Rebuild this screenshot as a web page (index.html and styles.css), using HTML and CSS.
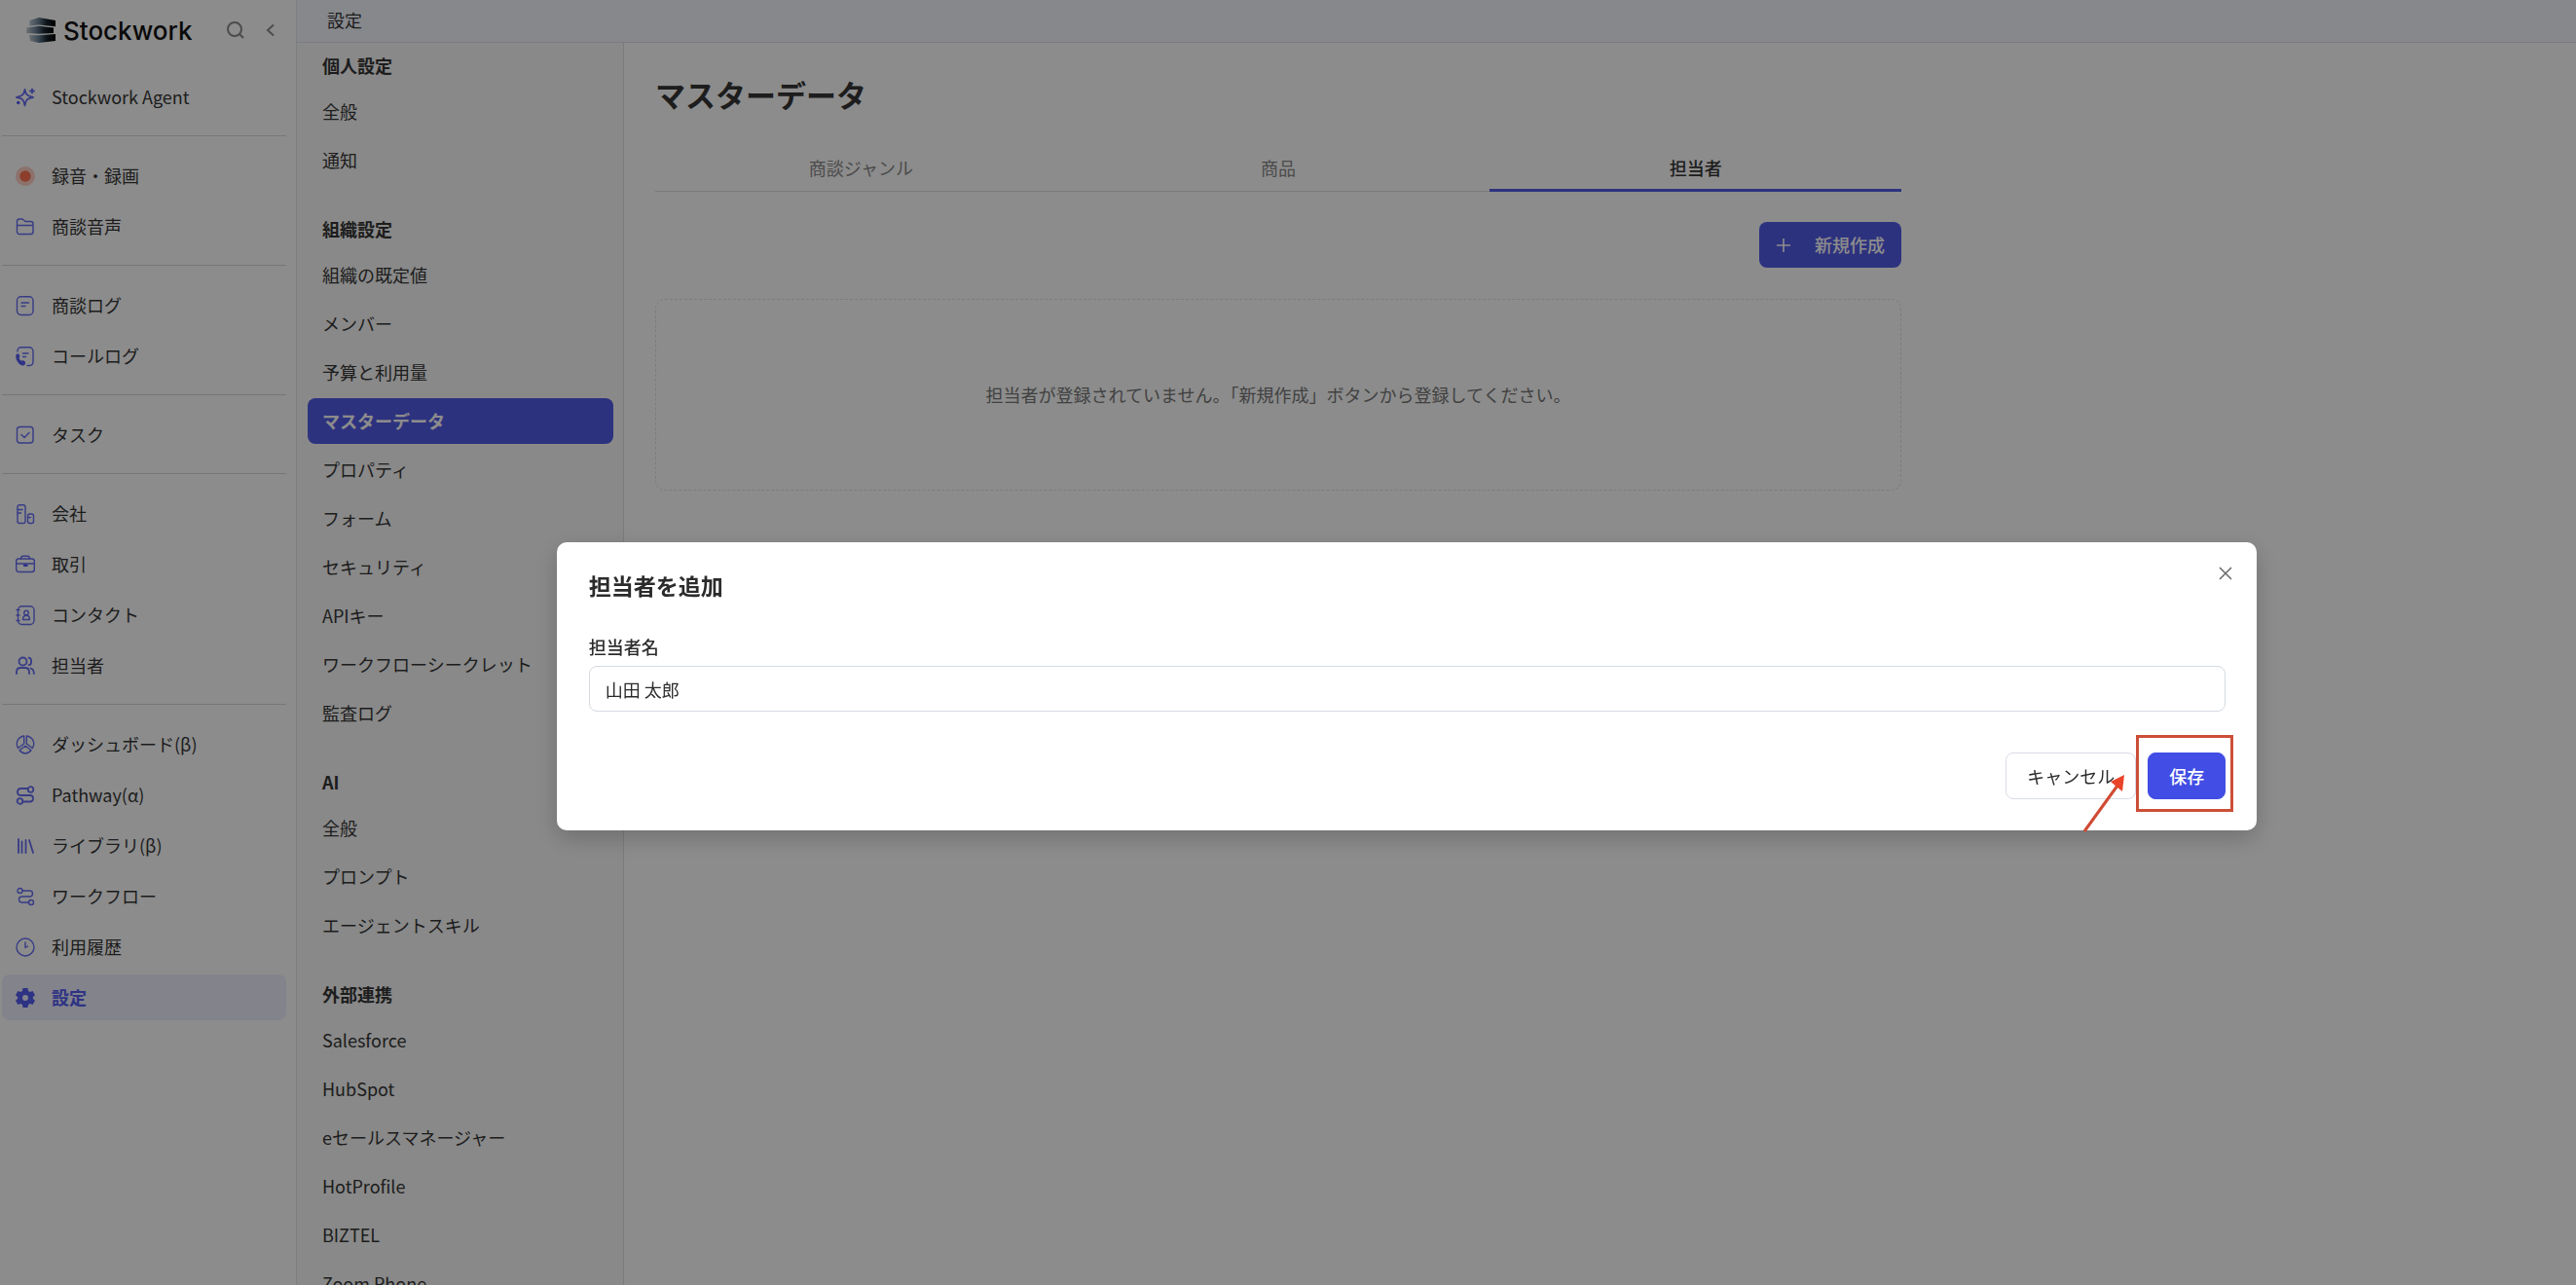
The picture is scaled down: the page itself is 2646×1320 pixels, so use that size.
FILE: index.html
```html
<!DOCTYPE html>
<html lang="ja">
<head>
  <meta charset="UTF-8">
  <title>設定 | Stockwork</title>
  <meta name="viewport" content="width=device-width, initial-scale=1.0">
  <link rel="stylesheet" href="styles.css">
</head>
<body>

<div class="app">

  <!-- Main sidebar -->
  <aside class="sidebar">
    <div class="sidebar-header">
      <a href="#" class="logo">
        <svg width="30" height="26" viewBox="0 0 30 26">
          <defs>
            <linearGradient id="logoFill" x1="0" x2="1">
              <stop offset="0" stop-color="#c3ccd4"/>
              <stop offset="0.35" stop-color="#6c8499"/>
              <stop offset="0.65" stop-color="#1c2833"/>
              <stop offset="1" stop-color="#000"/>
            </linearGradient>
          </defs>
          <path d="M3.500 3L13 0L30 3V9.300L13 7.500L3 8.500Z" fill="url(#logoFill)"/>
          <path d="M.5 10.500L13 8.800L28 10.500V16L13 16.800L0 16Z" fill="url(#logoFill)"/>
          <path d="M3 18L13 18.300L30 17V24L13 26L4 24Z" fill="url(#logoFill)"/>
        </svg>
        <span>Stockwork</span>
      </a>
      <button class="icon-button search" aria-label="検索">
        <svg width="18" height="18" viewBox="0 0 18 18"><circle cx="8" cy="8" r="7"/><path d="M13 13l4 4"/></svg>
      </button>
      <button class="icon-button" aria-label="閉じる">
        <svg width="8" height="12" viewBox="0 0 8 12"><path d="M7 0.5L1 6l6 5.5"/></svg>
      </button>
    </div>

    <nav>
      <div class="menu-group">
        <a href="#" class="menu-item">
          <svg class="icon bold" viewBox="0 0 20 20"><path d="M9.500 2c.8 5 2.500 6.700 8.500 8-6 .8-7.700 2.500-8.500 8.500C8.700 12.500 7 10.800 1 10c6-1.300 7.700-3 8.500-8zM17 1.500v4M15 3.500h4"/><circle class="fill" cx="2.800" cy="15.500" r="1.700"/></svg>
          Stockwork Agent
        </a>
      </div>
      <div class="menu-group">
        <a href="#" class="menu-item">
          <svg class="icon" viewBox="0 0 20 20"><circle class="rec-ring" cx="10" cy="10" r="10"/><circle class="rec-dot" cx="10" cy="10" r="5.700"/></svg>
          録音・録画
        </a>
        <a href="#" class="menu-item">
          <svg class="icon" viewBox="0 0 20 20"><path d="M1.500 15V4.500a2.500 2.500 0 0 1 2.500-2.500h3l3 2.500h5.500A2.500 2.500 0 0 1 18 7v8a2.500 2.500 0 0 1-2.500 2.500H4A2.500 2.500 0 0 1 1.500 15zM1.500 8.500h16.500"/></svg>
          商談音声
        </a>
      </div>
      <div class="menu-group">
        <a href="#" class="menu-item">
          <svg class="icon" viewBox="0 0 20 20"><rect x="1.500" y="0.700" width="16.500" height="18.800" rx="4"/><path d="M6 7h7.500M6 10.500h4"/></svg>
          商談ログ
        </a>
        <a href="#" class="menu-item">
          <svg class="icon" viewBox="0 0 20 20"><path d="M2 5V4.500A3.800 3.800 0 0 1 5.800.7H14a4 4 0 0 1 4 4v11a4 4 0 0 1-4 3.800h-2M7.500 7H13M7.500 10.500h3"/><path class="fill" d="M.5 8.500c.5-1.500 3-1.500 3.500 0 .5 1.300.5 2-.3 2.700 0 1.800 1 3 2.800 3.500 1-.8 2-.5 3 .5 1.300 1.500.3 4-1.500 4.300C4 20-.8 13.500.5 8.500z"/></svg>
          コールログ
        </a>
      </div>
      <div class="menu-group">
        <a href="#" class="menu-item">
          <svg class="icon" viewBox="0 0 20 20"><rect x="1.500" y="1.500" width="16.500" height="16.500" rx="3"/><path d="M6 9.500l3 3 5-5"/></svg>
          タスク
        </a>
      </div>
      <div class="menu-group">
        <a href="#" class="menu-item">
          <svg class="icon" viewBox="0 0 20 20"><rect x="2" y="0.700" width="8" height="18.800" rx="2"/><rect x="12.500" y="10" width="6" height="9.500" rx="2"/><path d="M2 5.500h5M2 9h3.500M12.500 13.500h3"/></svg>
          会社
        </a>
        <a href="#" class="menu-item">
          <svg class="icon" viewBox="0 0 20 20"><rect x="0.700" y="4" width="18.600" height="13.500" rx="2.500"/><path d="M5.500 4c0-2 .8-2.800 2-2.800h5c1.200 0 2 .8 2 2.800M.7 9h18.600"/><path class="fill" d="M8 9.500h4.500v2.500H8z"/></svg>
          取引
        </a>
        <a href="#" class="menu-item">
          <svg class="icon" viewBox="0 0 20 20"><rect x="2.500" y="0.700" width="16.500" height="18.800" rx="4"/><circle cx="11" cy="7.500" r="2.300"/><path d="M7.500 14.500c0-3 1.500-4.200 3.500-4.200s3.500 1.200 3.500 4.200zM1 4.500h3M1 10h3M1 15.500h3"/></svg>
          コンタクト
        </a>
        <a href="#" class="menu-item">
          <svg class="icon bold" viewBox="0 0 20 20"><circle cx="7.500" cy="5.500" r="4"/><path d="M1 18v-1.500c0-3 2-4.500 4-4.500h5c2 0 4 1.500 4 4.500V18M13.500 1.700c3.500 0 3.500 7.500 0 7.500M15.500 12.500c2 .5 3.300 2 3.300 5.500"/></svg>
          担当者
        </a>
      </div>
      <div class="menu-group">
        <a href="#" class="menu-item">
          <svg class="icon" viewBox="0 0 20 20"><path d="M8.700 1v8L2.500 13.500C-.5 8 2.500 2 8.700 1zM11.300 1v8l6 4.500c3.500-5.500.2-11.500-6-12.500zM10 11.300l-6 4.500c3.500 4.200 8.500 4.200 12 0z"/></svg>
          ダッシュボード(β)
        </a>
        <a href="#" class="menu-item">
          <svg class="icon bold" viewBox="0 0 20 20"><circle cx="15.500" cy="4" r="2.800"/><circle cx="4.500" cy="16" r="2.800"/><path d="M12.500 3H5c-4 0-4 7 0 7h10c4 0 4 6.500 0 6.500H7.500"/></svg>
          Pathway(α)
        </a>
        <a href="#" class="menu-item">
          <svg class="icon bold" viewBox="0 0 20 20"><path d="M3 3v14M6.500 5.500V17M10.500 4v13M14 4l4 13"/></svg>
          ライブラリ(β)
        </a>
        <a href="#" class="menu-item">
          <svg class="icon" viewBox="0 0 20 20"><circle cx="4.500" cy="4" r="2.500"/><circle cx="16" cy="16" r="2.500"/><path d="M7 4h7.500c4 0 4 6 0 6H6.500c-4 0-4 6 0 6h7"/></svg>
          ワークフロー
        </a>
        <a href="#" class="menu-item">
          <svg class="icon" viewBox="0 0 20 20"><circle cx="10" cy="10" r="9"/><path d="M10 5v5.500l2.500-1.500"/></svg>
          利用履歴
        </a>
        <a href="#" class="menu-item active">
          <svg class="icon" viewBox="0 0 20 20"><path class="gear" d="M7.500 0h5l.6 3 1.600.9L17.600 3 20 7.200 17.800 9.200v1.600L20 12.800 17.600 17l-2.900-.9-1.600.9-.6 3h-5l-.6-3-1.600-.9-2.900.9L0 12.800l2.200-2V9.200L0 7.200 2.400 3l2.900.9L6.900 3zM10 7a3 3 0 1 0 0 6 3 3 0 0 0 0-6z"/></svg>
          設定
        </a>
      </div>
    </nav>
  </aside>

  <div class="content">
    <header class="topbar">設定</header>

    <div class="columns">

      <!-- Settings menu -->
      <nav class="settings-nav">
        <section>
          <h2>個人設定</h2>
          <a href="#">全般</a>
          <a href="#">通知</a>
        </section>
        <section>
          <h2>組織設定</h2>
          <a href="#">組織の既定値</a>
          <a href="#">メンバー</a>
          <a href="#">予算と利用量</a>
          <a href="#" class="active">マスターデータ</a>
          <a href="#">プロパティ</a>
          <a href="#">フォーム</a>
          <a href="#">セキュリティ</a>
          <a href="#">APIキー</a>
          <a href="#">ワークフローシークレット</a>
          <a href="#">監査ログ</a>
        </section>
        <section>
          <h2>AI</h2>
          <a href="#">全般</a>
          <a href="#">プロンプト</a>
          <a href="#">エージェントスキル</a>
        </section>
        <section>
          <h2>外部連携</h2>
          <a href="#">Salesforce</a>
          <a href="#">HubSpot</a>
          <a href="#">eセールスマネージャー</a>
          <a href="#">HotProfile</a>
          <a href="#">BIZTEL</a>
          <a href="#">Zoom Phone</a>
        </section>
      </nav>

      <main class="main">
        <h1>マスターデータ</h1>
        <div class="tabs" role="tablist">
          <button role="tab">商談ジャンル</button>
          <button role="tab">商品</button>
          <button role="tab" class="active" aria-selected="true">担当者</button>
        </div>
        <div class="toolbar">
          <button class="create-button">
            <svg width="14" height="14" viewBox="0 0 14 14"><path d="M7 0v14M0 7h14"/></svg>
            新規作成
          </button>
        </div>
        <div class="empty">担当者が登録されていません。「新規作成」ボタンから登録してください。</div>
      </main>
    </div>
  </div>
</div>

<!-- Add person dialog -->
<div class="overlay">
  <form class="modal" role="dialog" aria-labelledby="modalTitle" onsubmit="event.preventDefault();">
    <button type="button" class="close" aria-label="閉じる">
      <svg width="12" height="12" viewBox="0 0 12 12"><path d="M0 0l12 12M12 0L0 12"/></svg>
    </button>
    <h2 id="modalTitle">担当者を追加</h2>
    <label for="personName">担当者名</label>
    <input type="text" id="personName" value="山田 太郎">
    <div class="actions">
      <button type="button" class="button">キャンセル</button>
      <div class="save-wrap">
        <button type="submit" class="button primary">保存</button>
        <span class="highlight"></span>
        <svg class="arrow" width="44" height="60" viewBox="0 0 44 60"><path class="line" d="M2 58L36 11"/><path class="head" d="M43 0L41 17L29 7Z"/></svg>
      </div>
    </div>
  </form>
</div>

</body>
</html>
```

FILE: styles.css
```css
* {
  box-sizing: border-box;
}

body {
  margin: 0;
  font-family: "Noto Sans CJK JP", sans-serif;
  font-size: 18px;
  line-height: 27px;
  color: #363636;
  background: #fff;
  overflow: hidden;
}

a {
  color: inherit;
  text-decoration: none;
}

h1,
h2 {
  margin: 0;
}

button,
input {
  font: inherit;
  color: inherit;
}

button {
  background: none;
  border: none;
  padding: 0;
  cursor: pointer;
}

svg {
  display: block;
  flex: none;
  fill: none;
  overflow: visible;
}

.app {
  display: flex;
  height: 100vh;
}

/* Main sidebar */
.sidebar {
  flex: none;
  width: 305px;
  padding: 0 10px 0 2px;
  border-right: 1px solid #e4e5ea;
}

.sidebar-header {
  display: flex;
  align-items: center;
  height: 62px;
  padding: 0 12px 0 25px;
  margin-bottom: 14px;
}

.logo {
  display: flex;
  align-items: center;
  gap: 8px;
  margin-right: auto;
  font-family: Inter, sans-serif;
  font-size: 26px;
  font-weight: 500;
  color: #111;
}

.icon-button svg {
  stroke: #8a8a8a;
  stroke-width: 2;
}

.icon-button.search {
  margin-right: 23px;
}

.menu-group {
  display: flex;
  flex-direction: column;
  gap: 5px;
  padding-bottom: 16px;
}

.menu-group + .menu-group {
  border-top: 1px solid #d8d8da;
  padding-top: 17px;
}

.menu-item {
  display: flex;
  align-items: center;
  gap: 17px;
  height: 47px;
  padding: 0 14px;
  border-radius: 8px;
}

.menu-item.active {
  color: #555df0;
  background: #eeeeff;
  font-weight: bold;
}

.icon {
  width: 20px;
  height: 20px;
  stroke: #666df2;
  stroke-width: 1.4;
  stroke-linecap: round;
  stroke-linejoin: round;
}

.icon.bold {
  stroke-width: 1.8;
}

.icon .fill {
  fill: #555df0;
  stroke: none;
}

.icon .gear {
  fill: #555df0;
  fill-rule: evenodd;
  stroke: none;
}

.icon .rec-ring {
  fill: #ffd0c4;
  stroke: none;
}

.icon .rec-dot {
  fill: #ff7350;
  stroke: none;
}

/* Right side */
.content {
  flex: 1;
  min-width: 0;
  display: flex;
  flex-direction: column;
}

.topbar {
  flex: none;
  height: 44px;
  padding: 7px 31px;
  background: #f4f7ff;
  border-bottom: 1px solid #dfe2ea;
}

.columns {
  flex: 1;
  min-height: 0;
  display: flex;
}

.settings-nav {
  flex: none;
  width: 336px;
  padding: 10px 10px 0 11px;
  background: #f9f9f9;
  border-right: 1px solid #e2e2e6;
  overflow: hidden;
}

.settings-nav section {
  display: flex;
  flex-direction: column;
  gap: 3px;
  margin-bottom: 34px;
}

.settings-nav h2 {
  padding: 0 15px;
  margin-bottom: 7px;
  font-size: 18px;
  line-height: 27px;
}

.settings-nav a {
  height: 47px;
  padding: 10px 15px;
  border-radius: 8px;
}

.settings-nav a.active {
  color: #fff;
  background: #525be8;
  font-weight: bold;
}

.main {
  flex: 1;
  padding: 30px 32px;
}

.main h1 {
  font-size: 31px;
  line-height: 46px;
}

.main > * {
  max-width: 1280px;
}

.tabs {
  display: flex;
  gap: 6px;
  margin-top: 30px;
  border-bottom: 1px solid #dcdce0;
}

.tabs button {
  flex: 1;
  height: 47px;
  margin-bottom: -1px;
  border-bottom: 3px solid transparent;
  color: #8a8a8a;
}

.tabs button.active {
  color: #363636;
  border-color: #525be8;
  font-weight: 500;
}

.toolbar {
  display: flex;
  justify-content: flex-end;
  margin: 31px 0 32px;
}

.create-button {
  display: flex;
  align-items: center;
  gap: 25px;
  height: 47px;
  padding: 0 17px 0 18px;
  border-radius: 8px;
  color: #fff;
  background: #525be8;
  font-weight: 500;
}

.create-button svg {
  stroke: #fff;
  stroke-width: 1.6;
}

.empty {
  padding: 84px 20px;
  border: 1px dashed #e2e2e5;
  border-radius: 10px;
  color: #777;
  text-align: center;
}

/* Dialog */
.overlay {
  position: fixed;
  inset: 0;
  display: flex;
  align-items: center;
  justify-content: center;
  padding: 90px 0 0 244px;
  background: rgba(0, 0, 0, 0.45);
}

.modal {
  position: relative;
  flex: none;
  width: 66vw;
  padding: 32px 32px 32px 33px;
  border-radius: 10px;
  color: #2b2b2b;
  background: #fff;
  box-shadow: 0 8px 24px rgba(0, 0, 0, 0.2);
}

.modal h2 {
  margin-bottom: 38px;
  font-size: 23px;
  line-height: 24px;
}

.modal label {
  display: block;
  margin-bottom: 6px;
  font-weight: 500;
}

.modal input {
  display: block;
  width: 100%;
  height: 47px;
  padding: 0 16px;
  border: 1px solid #d5dae1;
  border-radius: 8px;
}

.close {
  position: absolute;
  top: 20px;
  right: 20px;
  width: 24px;
  height: 24px;
  padding: 6px;
}

.close svg {
  stroke: #666;
  stroke-width: 1.5;
}

.actions {
  display: flex;
  justify-content: flex-end;
  gap: 12px;
  margin-top: 42px;
}

.button {
  display: block;
  height: 48px;
  padding: 0 21px;
  border: 1px solid #d9dde6;
  border-radius: 8px;
}

.button.primary {
  color: #fff;
  background: #414de4;
  border-color: #414de4;
  font-weight: 500;
}

/* Red marker round the save button */
.save-wrap {
  position: relative;
}

.highlight {
  position: absolute;
  inset: -18px -8px -13px -12px;
  border: 3px solid #cc4f38;
  pointer-events: none;
}

.arrow {
  position: absolute;
  top: 23px;
  right: 103px;
  pointer-events: none;
}

.arrow .line {
  stroke: #d04a33;
  stroke-width: 3;
}

.arrow .head {
  fill: #ea4327;
}
```
